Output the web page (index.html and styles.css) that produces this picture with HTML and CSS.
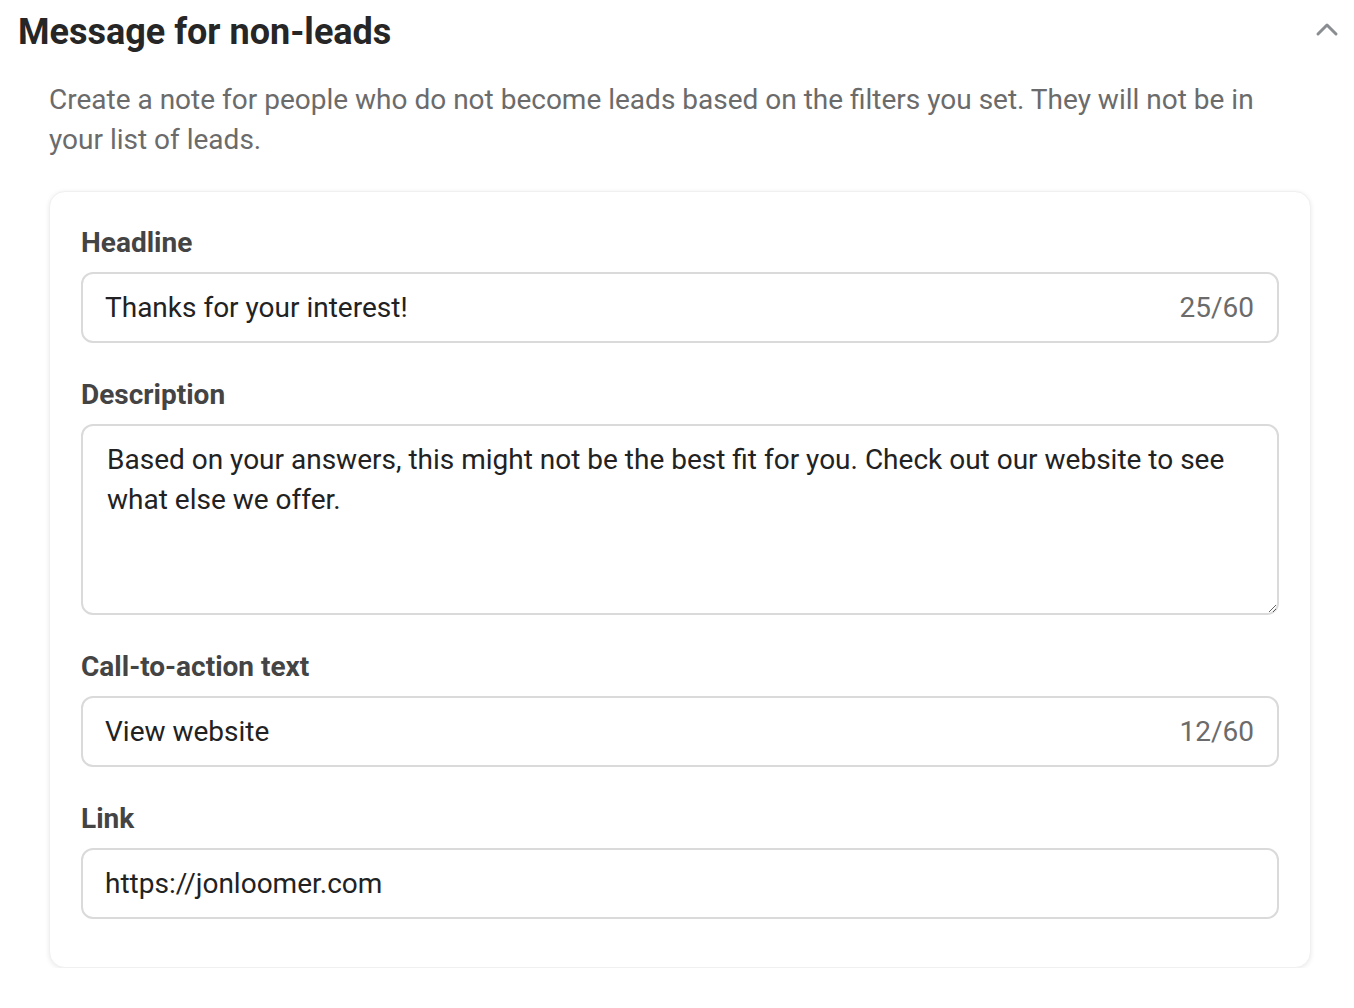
FILE: index.html
```html
<!DOCTYPE html>
<html>
<head>
<meta charset="utf-8">
<link rel="stylesheet" href="styles.css">
</head>
<body>
<section class="panel">
  <header class="panel-head">
    <h1 class="title">Message for non-leads</h1>
    <svg class="chevron" width="24" height="16" viewBox="0 0 24 16"><path d="M3 13 L12 4 L21 13" fill="none" stroke="#8a8d91" stroke-width="3" stroke-linecap="round" stroke-linejoin="round"/></svg>
  </header>
  <p class="intro">Create a note for people who do not become leads based on the filters you set. They will not be in your list of leads.</p>
  <div class="card">
    <div class="field">
      <label class="label">Headline</label>
      <div class="box">
        <input class="input" type="text" value="Thanks for your interest!">
        <span class="count">25/60</span>
      </div>
    </div>
    <div class="field">
      <label class="label">Description</label>
      <textarea class="textarea">Based on your answers, this might not be the best fit for you. Check out our website to see what else we offer.</textarea>
    </div>
    <div class="field">
      <label class="label">Call-to-action text</label>
      <div class="box">
        <input class="input" type="text" value="View website">
        <span class="count">12/60</span>
      </div>
    </div>
    <div class="field">
      <label class="label">Link</label>
      <div class="box">
        <input class="input" type="text" value="https://jonloomer.com">
      </div>
    </div>
  </div>
</section>
</body>
</html>
```
FILE: styles.css
```css
* { box-sizing: border-box; }
body {
  margin: 0;
  background: #fff;
  font-family: Roboto, "Noto Sans", sans-serif;
  color: #1c1e21;
}
.panel {
  padding: 10px 0 0 18px;
  width: 1354px;
}
.panel-head {
  display: flex;
  align-items: center;
  justify-content: space-between;
  padding-right: 15px;
  height: 44px;
}
.title {
  margin: 0;
  font-size: 36px;
  font-weight: 700;
  color: #262626;
  letter-spacing: 0;
}
.chevron { display: block; margin-top: -6px; }
.intro {
  margin: 26px 0 0 31px;
  width: 1230px;
  font-size: 28px;
  line-height: 40px;
  color: #6b6b6b;
}
.card {
  margin: 31px 0 0 31px;
  width: 1262px;
  background: #fff;
  border-radius: 16px;
  border: 1px solid #f0f0f0;
  box-shadow: 0 1px 5px rgba(0,0,0,0.09);
  padding: 35px 31px 48px 31px;
  display: flex;
  flex-direction: column;
  gap: 36px;
}
.field { display: flex; flex-direction: column; gap: 13px; }
.label {
  font-size: 28px;
  line-height: 32px;
  font-weight: 700;
  color: #444;
}
.box {
  height: 71px;
  border: 2px solid #dadada;
  border-radius: 12px;
  display: flex;
  align-items: center;
  padding: 0 23px 0 22px;
}
.input {
  flex: 1;
  border: none;
  outline: none;
  padding: 0;
  font-family: inherit;
  font-size: 28px;
  color: #222;
  background: transparent;
}
.count {
  font-size: 28px;
  color: #6b6b6b;
}
.textarea {
  height: 191px;
  border: 2px solid #dadada;
  border-radius: 12px;
  padding: 14px 40px 14px 24px;
  font-family: inherit;
  font-size: 28px;
  line-height: 40px;
  color: #222;
  outline: none;
  resize: vertical;
}
```
